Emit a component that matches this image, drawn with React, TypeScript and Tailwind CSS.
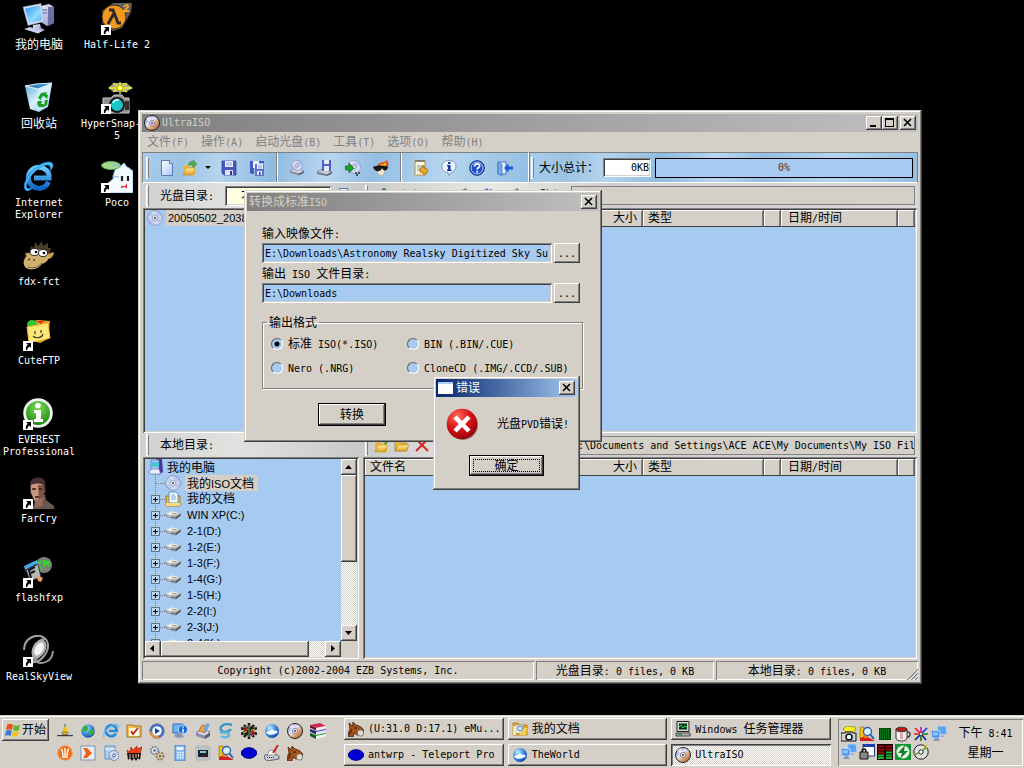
import React from 'react';

const MONO = "font-['DejaVu_Sans_Mono','Noto_Sans_CJK_SC',monospace]";
const CJK = "font-['Noto_Sans_CJK_SC',sans-serif] text-[12px]";
const SMALL_SANS = "font-['Liberation_Sans','Noto_Sans_CJK_SC',sans-serif] text-[11px]";
const RAISED = 'bg-[#d4d0c8] shadow-[inset_-1px_-1px_0_#404040,inset_1px_1px_0_#fff,inset_-2px_-2px_0_#808080]';
const WINDOW = 'bg-[#d4d0c8] shadow-[inset_-1px_-1px_0_#404040,inset_1px_1px_0_#d4d0c8,inset_-2px_-2px_0_#808080,inset_2px_2px_0_#fff]';
const SUNKEN = 'shadow-[inset_1px_1px_0_#808080,inset_-1px_-1px_0_#fff,inset_2px_2px_0_#404040,inset_-2px_-2px_0_#d4d0c8]';
const THIN = 'shadow-[inset_1px_1px_0_#808080,inset_-1px_-1px_0_#fff]';
const DITHER = 'bg-[repeating-conic-gradient(#fff_0_25%,#d4d0c8_0_50%)] bg-[length:2px_2px]';
const BRUSHED = 'bg-[linear-gradient(100deg,#d0d0d0,#e2e2e0_12%,#c9c9c9_28%,#e8e8e6_45%,#cfcfcf_60%,#d8d8d6)]';

/* Chinese runs are set at 12px, Latin runs in a half-width face. */
function T({ children, sans = false }: { children: string; sans?: boolean }) {
  const parts = children.split(/([\u3000-\u9fff\uff00-\uffef]+)/).filter(Boolean);
  return (
    <span className={`whitespace-pre ${sans ? SMALL_SANS : `${MONO} text-[10px]`}`}>
      {parts.map((p, i) =>
        /[\u3000-\u9fff\uff00-\uffef]/.test(p) ? <span key={i} className={CJK}>{p}</span> : p
      )}
    </span>
  );
}

type IconProps = { children: React.ReactNode; size?: 16 | 32 };
function Ic({ children, size = 16 }: IconProps) {
  return (
    <svg viewBox={size === 16 ? '0 0 16 16' : '0 0 32 32'} className={size === 16 ? 'h-4 w-4 shrink-0' : 'h-8 w-8 shrink-0'} aria-hidden="true">
      {children}
    </svg>
  );
}

function Defs() {
  return (
    <svg width="0" height="0" className="absolute" aria-hidden="true">
      <defs>
        <linearGradient id="screen" x1="0" y1="0" x2="1" y2="1"><stop offset="0" stopColor="#2b8ff0" /><stop offset=".6" stopColor="#8fdcff" /><stop offset="1" stopColor="#4aa8f8" /></linearGradient>
        <linearGradient id="metal" x1="0" y1="0" x2="1" y2="1"><stop offset="0" stopColor="#f4f5ff" /><stop offset="1" stopColor="#8088c0" /></linearGradient>
        <linearGradient id="bin" x1="0" y1="0" x2="1" y2="1"><stop offset="0" stopColor="#5aa6d8" /><stop offset=".5" stopColor="#d8f1fb" /><stop offset="1" stopColor="#6cb2dc" /></linearGradient>
        <linearGradient id="ie" x1="0" y1="0" x2="0" y2="1"><stop offset="0" stopColor="#6fd0ff" /><stop offset="1" stopColor="#0b62c4" /></linearGradient>
        <radialGradient id="green" cx=".5" cy=".3" r=".7"><stop offset="0" stopColor="#7ee05a" /><stop offset="1" stopColor="#1d8a10" /></radialGradient>
        <radialGradient id="red" cx=".35" cy=".25" r=".85"><stop offset="0" stopColor="#ff6a5a" /><stop offset=".5" stopColor="#d41418" /><stop offset="1" stopColor="#8c0008" /></radialGradient>
        <linearGradient id="disc" x1="0" y1="0" x2="1" y2="1"><stop offset="0" stopColor="#6a78d8" /><stop offset=".4" stopColor="#dfe6ff" /><stop offset=".65" stopColor="#e0a070" /><stop offset="1" stopColor="#8a4a28" /></linearGradient>
        <linearGradient id="pale" x1="0" y1="0" x2="1" y2="1"><stop offset="0" stopColor="#fff" /><stop offset=".5" stopColor="#b8c0f0" /><stop offset="1" stopColor="#f4f8ff" /></linearGradient>
        <linearGradient id="folder" x1="0" y1="0" x2="0" y2="1"><stop offset="0" stopColor="#ffee9a" /><stop offset="1" stopColor="#e0a020" /></linearGradient>
        <radialGradient id="ball" cx=".35" cy=".3" r=".8"><stop offset="0" stopColor="#c8ecff" /><stop offset=".5" stopColor="#3f8ee8" /><stop offset="1" stopColor="#0a3a9a" /></radialGradient>
        <linearGradient id="page" x1="0" y1="0" x2="1" y2="1"><stop offset="0" stopColor="#fff" /><stop offset="1" stopColor="#a8c8f8" /></linearGradient>
        <linearGradient id="steel" x1="0" y1="0" x2="1" y2="1"><stop offset="0" stopColor="#a8a8a8" /><stop offset=".4" stopColor="#f4f4f4" /><stop offset="1" stopColor="#8c8c90" /></linearGradient>
      </defs>
    </svg>
  );
}

/* ---------- small icons ---------- */
const Disc = () => <Ic><circle cx="8" cy="8" r="7.500" fill="url(#disc)" stroke="#222" /><path d="M8 8 2 4a7 7 0 0 1 4-3z" fill="#fff" opacity=".6" /><circle cx="8" cy="8" r="2.600" fill="#e8e8f8" stroke="#667" strokeWidth=".7" /><circle cx="8" cy="8" r="1" fill="#445" /></Ic>;
const PaleDisc = () => <Ic><circle cx="8" cy="8" r="7.300" fill="url(#pale)" stroke="#8088b8" strokeWidth=".8" /><path d="M8 8 1.500 6 4 2z" fill="#7cc" opacity=".5" /><path d="m8 8 6 2-2 3z" fill="#b8a" opacity=".4" /><circle cx="8" cy="8" r="2.400" fill="#fff" stroke="#8890b0" strokeWidth=".7" /><circle cx="8" cy="8" r="1" fill="#334" /></Ic>;
const Page = () => <Ic><path d="M2.500.5h8l3 3v12h-11z" fill="url(#page)" stroke="#5878b8" /><path d="M10.500.5v3h3" fill="#dce8ff" stroke="#5878b8" /></Ic>;
const Folder = () => <Ic><path d="M1 4h5l1 2h6v8H1z" fill="#e8b838" stroke="#a07818" strokeWidth=".6" /><path d="m1 14 3-6h11l-3 6z" fill="url(#folder)" stroke="#b08820" strokeWidth=".6" /></Ic>;
const OpenFolder = () => <Ic><path d="M1 5h5l1 2h6v8H1z" fill="#e8b838" /><path d="m1 15 3-7h9l-2 7z" fill="url(#folder)" stroke="#b89028" strokeWidth=".6" /><path d="M6 5c1-3 3-4 5-3.500V0l4 4-4 4V5.500c-2-1-3-.5-5-.5z" fill="#4cb040" stroke="#2a7a20" strokeWidth=".4" /></Ic>;
const Floppy = () => <Ic><path d="M1 1h14v14H3l-2-2z" fill="#4858c0" stroke="#2c3890" strokeWidth=".7" /><path d="M4 1h8v6H4z" fill="#e8f0ff" /><path d="M4 10h8v5H4z" fill="#dfe4f8" /><path d="M9 11h2v4H9z" fill="#303c90" /><path d="M5 3h6M5 5h6" stroke="#98a8e0" /></Ic>;
const FloppyAs = () => <Ic><path d="M1 1h14v2H5v11H3l-2-1z" fill="#4858c0" /><path d="M4 1h6v7H4z" fill="#e8f0ff" /><path d="M6 4h9v12H6z" fill="#6070d0" /><path d="M8 4h6v5H8z" fill="#f0f4ff" /><path d="M9 6h4M9 8h4" stroke="#8090d8" /><path d="M8 11h5v4H8z" fill="#e4e8ff" /><path d="M10 12h1.500v3H10z" fill="#3040a0" /></Ic>;
const Burner = () => <Ic><path d="m1 11 5-3 9 3-5 4z" fill="#d8dce4" stroke="#707888" strokeWidth=".6" /><path d="m1 11 9 2v2.500L1 13z" fill="#888ea0" /><path d="m10 13 5-2v2l-5 2.500z" fill="#60667a" /><circle cx="8" cy="5.500" r="5.200" fill="url(#pale)" stroke="#8088b8" strokeWidth=".7" /><circle cx="8" cy="5.500" r="1.400" fill="#fff" stroke="#667" strokeWidth=".6" /></Ic>;
const Drive2 = () => <Ic><path d="m0 12 5-3 10 3-5 3z" fill="#c8ccd4" stroke="#606878" strokeWidth=".6" /><path d="m0 12 10 2.500v1.500L0 14z" fill="#777d90" /><path d="m10 14.500 5-2.500v1.500L10 16z" fill="#505668" /><path d="M5 0h9v11H5z" fill="#5060c0" /><path d="M7 0h5v4H7zM7 6h5v5H7z" fill="#e4e8ff" /></Ic>;
const DiscArrow = () => <Ic><circle cx="9" cy="7" r="6.500" fill="url(#pale)" stroke="#8898b0" strokeWidth=".7" /><circle cx="9" cy="7" r="1.800" fill="#fff" stroke="#667" strokeWidth=".6" /><path d="M0 6h4V3l5 5-5 5v-3H0z" fill="#20a028" stroke="#0a6010" strokeWidth=".6" /><path d="M10 13h2m1 0h2m-4 2h2" stroke="#234" strokeWidth="1.500" /></Ic>;
const Flame = () => <Ic><path d="M4 6c2-5 6-2 10-6 3 5 1 9-4 9z" fill="#e05010" /><path d="M7 5c3-2 4 0 6-3 1 3-1 5-4 6z" fill="#ffc830" /><path d="M4 8h8l-1 6-3 2-3-2z" fill="#f4e8c8" stroke="#a09070" strokeWidth=".5" /><path d="M0 7c4-2 12-2 15 0-1 5-5 4-6 1C8 12 2 13 0 7z" fill="#181818" /></Ic>;
const Options = () => <Ic><path d="M2 1h10v14H2z" fill="#fff8d8" stroke="#c09038" /><path d="M3 0v2m2-2v2m2-2v2m2-2v2m2-2v2" stroke="#445" /><path d="M4 6h6M4 8h4M4 10h3" stroke="#89a" /><path d="M7 9 11 5v3h2l2 3-2 3h-3l-1-2H7z" fill="#e8a828" stroke="#8a5808" strokeWidth=".7" /></Ic>;
const Info = () => <Ic><path d="M8 .5c5 0 7 3 7 6s-2 5-5 6l-2 3-1-3c-4 0-6-3-6-6s2-6 7-6z" fill="#eef4ff" stroke="#7898c8" /><path d="M7 2h2.500v2H7zM6 5h3.500v4.500h1V11H6V9.500h1v-3H6z" fill="#1838a0" /></Ic>;
const Help = () => <Ic><circle cx="8" cy="8" r="7.300" fill="#2050c8" stroke="#102878" /><circle cx="8" cy="8" r="6" fill="none" stroke="#b8d0ff" /><path d="M5.500 6.500C5.500 3 11 3 10.700 6c-.2 1.500-2.500 1.700-2.500 3.500" fill="none" stroke="#fff" strokeWidth="1.700" /><circle cx="8.200" cy="11.800" r="1" fill="#fff" /></Ic>;
const Exit = () => <Ic><path d="M1 2h8v12H1z" fill="#e4f0ff" stroke="#4070c0" /><path d="m1 2 4 2v12l-4-2z" fill="#78a8e8" stroke="#4070c0" strokeWidth=".7" /><path d="M16 6.500h-4.500V3.500L7 8l4.500 4.500v-3H16z" fill="#1858d8" /></Ic>;
const RedX = () => <Ic><path d="m2 2 12 12M14 2 2 14" stroke="#d82020" strokeWidth="1.800" /></Ic>;
const GreenUp = () => <Ic><path d="m8 0 7 6h-4v8H5V6H1z" fill="#28a030" stroke="#0a6010" strokeWidth=".6" /></Ic>;
const Gear = () => <Ic><circle cx="8" cy="8" r="5.500" fill="none" stroke="#3868c0" strokeWidth="4" strokeDasharray="3 1.500" /><circle cx="8" cy="8" r="4" fill="#90b8f0" stroke="#3868c0" /></Ic>;
const Hdd = () => <Ic><path d="m0 7 6-3 10 2.500-5.500 3.500z" fill="url(#steel)" /><path d="m0 7 10.500 3v2.500L1 9.500z" fill="#808084" /><path d="M10.500 10 16 6.500v2l-5.500 4z" fill="#58585c" /><path d="m2 8.500 4 1.200" stroke="#d8d8d8" /><path d="m7 6 4 .8" stroke="#8a8a8a" strokeWidth=".8" /></Ic>;
const Pc = () => <Ic><path d="M9 0h6l1 13-4 3V2z" fill="#483898" /><path d="M4 1h8v11H4z" fill="#b0c8f0" stroke="#5860b0" strokeWidth=".6" /><path d="M4 3h8v5H4z" fill="#48c8d8" /><path d="m1 13 4-3h7l2 5H4z" fill="#e8ecff" stroke="#5860a8" strokeWidth=".6" /></Ic>;
const Docs = () => <Ic><path d="M1 5h14v10H1z" fill="#f0b838" stroke="#b07810" /><path d="M4 1h7l2 2v9H4z" fill="#f4faff" stroke="#5898d0" /><path d="M6 4h4M6 6h5M6 8h5" stroke="#6ab0e8" /><path d="M1 12h14v3H1z" fill="#f8d878" /></Ic>;
const DocsTask = () => <Ic><path d="M1 2h5l1.500 2H15v10H1z" fill="#e8a828" stroke="#a06c08" strokeWidth=".7" /><path d="M4 4h7v8H4z" fill="#f8fcff" stroke="#8898b0" strokeWidth=".6" /><path d="m12 7 3 0-1 7H7z" fill="#f8d050" /><path d="M1 5h3v9H1z" fill="#ffe890" /><circle cx="8" cy="7.500" r="2.500" fill="#d8f0ff" stroke="#4878b8" /></Ic>;
const Ball = () => <Ic><circle cx="8" cy="8" r="7" fill="url(#ball)" /><path d="M2 10c2-3 4-1 6-4 1 3 3 0 6 3-3 3-9 4-12 1z" fill="#f4fcff" /></Ic>;
const Globe = () => <Ic><circle cx="8" cy="8" r="6.800" fill="url(#ball)" /><path d="M3 4c3-3 6-1 5 2S3 10 2 8zm7 3c3-2 4.500 0 4 2s-4 5-5 3 0-3 1-5z" fill="#38b038" /></Ic>;
const IeS = () => <Ic><path d="M13 10.500a5.500 5.500 0 1 1 .7-3.500v1H6" fill="none" stroke="#2488e0" strokeWidth="2.700" /><path d="M1 14C-1 9 10-1 15 2c1 1 0 3-1 4" fill="none" stroke="#68b8f0" strokeWidth="1.300" /></Ic>;
const Oval = () => <Ic><ellipse cx="8" cy="8" rx="7.700" ry="5.300" fill="#0000d8" stroke="#000080" /><path d="M4 7h3m2 2h3M5 10h2" stroke="#0000a0" /></Ic>;
const Donkey = () => <Ic><path d="M1 2 4.500 5 5 1l3 3c4 1 7 3 8 6l-3 3-4 1-3-2-1 4H0c1-3 0-5 2-8z" fill="#a4531c" stroke="#401804" strokeWidth=".8" /><circle cx="12.500" cy="12" r="3.200" fill="#e0dcd4" stroke="#554" strokeWidth=".7" /><path d="M6 7h3M1 14c2-2 2-4 3-6" stroke="#381400" strokeWidth="1" fill="none" /></Ic>;
const Net = () => <Ic><path d="M6 0h9l1 8-8 1z" fill="#58a4f8" stroke="#c0d0e8" /><path d="m11 9 3 2h-6z" fill="#98a8c0" /><path d="m0 4 9 1v7l-8 0z" fill="#4890f0" stroke="#c8d8f0" /><path d="m2 6 5 .5v3l-5 0z" fill="#88c8ff" /><path d="M4 12h3l2 3H2z" fill="#8898b8" /></Ic>;
const Plug = () => <Ic><path d="M8 1v8" stroke="#789" strokeWidth="1.500" /><path d="M6 4h4v5H6z" fill="#f0c020" /><path d="M5 9h6v3H5z" fill="#d8b020" stroke="#554" strokeWidth=".5" /><path d="M0 12.500h16" stroke="#384048" strokeWidth="1.500" /><path d="M0 11h5m6 0h5" stroke="#c8ccd0" strokeWidth="2" /></Ic>;
const Check = () => <Ic><path d="M1 2h6l1 1h7v11H1z" fill="#f4c050" stroke="#a07020" /><path d="M3 5h10v8H3z" fill="#fffbe8" /><path d="m5 8 2 3 5-6" fill="none" stroke="#c02010" strokeWidth="1.800" /></Ic>;
const Player = () => <Ic><circle cx="8" cy="8" r="7.300" fill="#3868c8" stroke="#889" /><path d="M1 8a7 7 0 0 0 10 6.500z" fill="#e89030" /><circle cx="8" cy="8" r="4.800" fill="#f4faff" /><path d="m6 5 5 3-5 3z" fill="#1840a0" /></Ic>;
const PcInfo = () => <Ic><path d="M1 1h10l1 9H1z" fill="#68b8f8" stroke="#3868b0" /><path d="m4 11 6 0 2 3-7 1-3-2z" fill="#8898b0" /><circle cx="11" cy="6.500" r="4.500" fill="#1068e0" stroke="#cde" /><path d="M11 3.500v1.200m0 1v4" stroke="#fff" strokeWidth="1.500" /></Ic>;
const Printer = () => <Ic><path d="m1 10 6-4 8 3-5 5z" fill="#d8dce8" stroke="#556" strokeWidth=".7" /><path d="m1 10 9 2.500v3.500l-9-3z" fill="#8890a8" /><path d="m10 12.500 5-3v3.500l-5 3z" fill="#586078" /><path d="M4 8 7 2l5 1-2 7z" fill="#f0a030" stroke="#845" strokeWidth=".6" /><path d="m8 7 4-7 3 1-3 7z" fill="#68a8e8" /></Ic>;
const Swirl = () => <Ic><path d="M14 2C5-1 0 5 4 8c3 2 8 0 9-2" fill="none" stroke="#3898c8" strokeWidth="2.400" /><path d="M2 9c2 2 10-1 9 3-1 3-6 3-8 1" fill="none" stroke="#60b8d8" strokeWidth="2.400" /></Ic>;
const Burst = () => <Ic><path d="M8 0v16M0 5l16 6M0 11l16-6M3 2l10 12M13 2 3 14" stroke="#181818" strokeWidth="2.600" /><path d="M8 2v12" stroke="#30b030" strokeWidth="1.300" /><path d="m2 6 4 1.500m4 1 4 1.500" stroke="#e02020" strokeWidth="1.500" /><path d="m2 10 4-1.500m4-1L14 6" stroke="#c8c830" strokeWidth="1.300" /><path d="m4 3 3 4m2 2 3 4" stroke="#e84090" strokeWidth="1.200" /></Ic>;
const Books = () => <Ic><path d="m0 2 10-2 6 3-10 2z" fill="#d02858" /><path d="m0 2 6 3v2.500L0 4.500z" fill="#701030" /><path d="m6 5 10-2v2.500L6 7.500z" fill="#f4ecec" /><path d="m0 6 6 2 10-2v1L6 9.500z" fill="#3040c8" /><path d="m0 6 6 3v2.500L0 8.500z" fill="#182070" /><path d="m6 9 10-2v2.500L6 11.500z" fill="#e8e8f4" /><path d="m0 10 6 2 10-2v1L6 13.500z" fill="#28a040" /><path d="m0 10 6 3v3l-6-3z" fill="#105820" /><path d="m6 13 10-2v2.500L6 16z" fill="#e8f4e8" /></Ic>;
const Orange = () => <Ic><circle cx="8" cy="8" r="7.300" fill="#f07018" stroke="#e8a070" /><path d="M4 4c2 1 2 5 2 9M8 3v10m4-9c-2 1-2 5-2 9" stroke="#fff" strokeWidth="1.400" fill="none" /></Ic>;
const Play = () => <Ic><path d="M1 1h14v14H1z" fill="#e8ecf4" stroke="#8090a8" /><path d="M3 3h4l5 5-5 5H3l3-5z" fill="#f06010" /></Ic>;
const DiscBox = () => <Ic><path d="M2 1h10v13H2z" fill="#a8d0f0" stroke="#5890c0" /><path d="M2 4h10" stroke="#fff" /><circle cx="11" cy="10.500" r="5" fill="url(#pale)" stroke="#8088a8" /><circle cx="11" cy="10.500" r="1.300" fill="#fff" stroke="#568" /></Ic>;
const Nero = () => <Ic><path d="M2 9 1 5l3 2 1-5 2 3 4-4v3l5-2-2 7z" fill="#f04010" stroke="#901000" strokeWidth=".6" /><path d="M1 8h14l-1 7-2-2-2 3-2-3-2 3-2-3-2 2z" fill="#181010" /><path d="M4 9v4m3-4v4m3-4v4m2.500-4v3" stroke="#f0c8a0" /></Ic>;
const Gears = () => <Ic><circle cx="5.500" cy="5.500" r="3.600" fill="#e8ecf8" stroke="#8890a8" strokeWidth="2.400" strokeDasharray="2 .8" /><circle cx="5.500" cy="5.500" r="1.300" fill="#606880" /><circle cx="11" cy="11" r="3.400" fill="#f0e0b0" stroke="#908070" strokeWidth="2.400" strokeDasharray="2 .8" /><circle cx="11" cy="11" r="1.200" fill="#605848" /></Ic>;
const Calc = () => <Ic><path d="M3 0h10v16H3z" fill="#88b8f0" stroke="#4880c8" /><path d="M4.500 2h7v3h-7z" fill="#e8f8ff" /><path d="M5 7.500h7M5 10h7M5 12.500h7" stroke="#fff" strokeWidth="1.600" strokeDasharray="1.600 1" /></Ic>;
const Cam = () => <Ic><rect width="16" height="16" rx="4" fill="#a8b8c0" opacity=".6" /><path d="M3 5h10v7H3z" fill="#202428" /><path d="M5 6h6v2H5z" fill="#78c8e8" /></Ic>;
const Search = () => <Ic><path d="M1 1h4v12H1z" fill="#f0c020" stroke="#906000" strokeWidth=".6" /><path d="m1 12 6-2 9 5H1z" fill="#d02020" /><path d="M5 2h4v10H5z" fill="#e88020" /><circle cx="8.500" cy="5.500" r="4" fill="#d8f4ff" stroke="#2860b0" strokeWidth="1.300" /><path d="m11 8 4 5" stroke="#2860b0" strokeWidth="2" /></Ic>;
const Scanner = () => <Ic><path d="m1 10 10-1 4 2v3l-12 2-3-3z" fill="#c8ccd0" stroke="#445" strokeWidth=".8" /><path d="m3 10 3-5 6 1-1 4z" fill="#fff" stroke="#566" strokeWidth=".6" /><path d="m9 8 5-8" stroke="#d02020" strokeWidth="2" /><path d="M3 12.500h8" stroke="#333" strokeDasharray="1 1" /></Ic>;
const Monitor = () => <Ic><path d="M2 .5h12v10H2z" fill="#d8d8d8" stroke="#222" /><path d="M4 2.500h8v6H4z" fill="#003018" /><path d="m4 6 2-2 2 3 2-2 2 1" stroke="#30f060" fill="none" /><path d="M1 12h14v3H1z" fill="#b8b8b8" stroke="#222" strokeWidth=".8" /><path d="M3 13.500h4" stroke="#20a040" /></Ic>;
const Camera = () => <Ic><path d="m2 3 4-3 8 1 1 3-4 2H5z" fill="#f8f020" stroke="#666600" strokeWidth=".6" /><path d="M0 7h4l1-1h6l1 1h3v8H0z" fill="#d0d0d0" stroke="#111" /><circle cx="8" cy="11" r="3" fill="#e8ffff" stroke="#111" strokeWidth="1.500" /></Ic>;
const GridG = () => <Ic><path d="M2 2h12v12H2z" fill="#004808" /><path d="M3 4h10M3 6h10M3 8h10M3 10h10M3 12h10" stroke="#18a030" strokeDasharray="1 1" /></Ic>;
const Mug = () => <Ic><path d="M1 3h11v9c0 4-11 4-11 0z" fill="#f4f0f0" stroke="#333" /><ellipse cx="6.500" cy="3.500" rx="5.500" ry="2.300" fill="#c01818" stroke="#333" /><path d="M5 7h3v6H5z" fill="#e8a8a8" /><path d="M12 6c4-1 4 5 0 5" fill="none" stroke="#444" strokeWidth="1.500" /></Ic>;
const Star = () => <Ic><path d="M8 7V1" stroke="#d020c0" strokeWidth="1.700" /><path d="m9 7 5-5" stroke="#2038e0" strokeWidth="1.700" /><path d="M7 7 2 2M7 8H1" stroke="#e02020" strokeWidth="1.700" /><path d="M9 8h6M8 9v6" stroke="#188020" strokeWidth="1.700" /><path d="m9 9 4 5M7 9l-5 5" stroke="#1020a0" strokeWidth="1.700" /></Ic>;
const Lock = () => <Ic><path d="M4 0h11.500v12H4z" fill="#fff" stroke="#223888" /><path d="M4 0h11.500v3H4z" fill="#2040b0" /><path d="M1 8h8v7H1z" fill="#888" stroke="#111" /><path d="M3 8c0-4 4-4 4 0" fill="none" stroke="#111" strokeWidth="1.400" /></Ic>;
const Meter = () => <Ic><path d="M0 0h16v16H0z" fill="#180000" /><path d="M1 2.500h6M1 5.500h6M1 8.500h6M9 2.500h6M9 5.500h6" stroke="#980808" strokeWidth="2" /><path d="M1 11.500h6M1 14h6M9 8.500h6M9 11.500h6M9 14h6" stroke="#18b030" strokeWidth="2" /></Ic>;
const Bolt = () => <Ic><path d="M0 0h16v16H0z" fill="#189038" /><circle cx="8" cy="8" r="6.500" fill="#e8f4e8" /><path d="M10 1 3 9h4l-2 6 8-8H9z" fill="#108028" /></Ic>;
const CdTray = () => <Ic><circle cx="8" cy="8" r="7.200" fill="#e0e4e0" stroke="#222" /><path d="M8 8 12 2l2 3zM8 8l-6 4-1-3z" fill="#80a858" /><circle cx="8" cy="8" r="2.200" fill="#fff" stroke="#222" /><path d="m11 1 4 0-1 3z" fill="#e8d020" /></Ic>;
const Flag = () => <Ic><path d="M2 3c2-1.500 4-1.500 6-.3L7 8C5 7 3.500 7 1 8z" fill="#e85020" /><path d="M9 3c2 1 4 1 6-.5L14 8c-2 1.200-4 1.200-6 0z" fill="#60b830" /><path d="M1 9c2-1.200 4-1.200 5.800-.2L5.500 14C4 13 2 13 0 14z" fill="#3878e0" /><path d="M7.800 9c2 1.200 4 1 6 0l-1.300 5c-2 1.300-4 1-6 0z" fill="#f8c020" /></Ic>;

/* ---------- desktop icons ---------- */
function Shortcut() {
  return <g><path d="M0 22h10v10H0z" fill="#fff" /><path d="M3 24h5v5L6.500 27.500C5 28.500 4.500 29.500 4.300 31L3 31c-.6-2 .4-4 1.800-5.200z" fill="#000" /></g>;
}
const MyComputer = () => <Ic size={32}><path d="m18 3 8-2 5 3v16l-7 3-6-4z" fill="url(#metal)" /><path d="m25 4 6 0v16l-6 3z" fill="#6870a8" /><path d="M19 7h5M19 10h5" stroke="#5058a0" /><path d="m0 4 18-3.500 3 18-16 4z" fill="#dde2f8" stroke="#8890c0" strokeWidth=".6" /><path d="m2 5.500 15-3 2 14.500L6 20.500z" fill="url(#screen)" /><path d="m10 22 7-1 1 4 4 2-7 3-10-3 5-2z" fill="url(#metal)" /><path d="m1 26 6-2 13 3.500-5 3z" fill="#c8d0f0" /></Ic>;
const Recycle = () => <Ic size={32}><path d="m2 4 13 2L29 1l-4 24-9 5-9-3z" fill="url(#bin)" /><path d="m2 4 11-2 16-1-14 6z" fill="#3888c0" stroke="#e4f8ff" /><path d="m15 7-1 22 11-5L29 2z" fill="#d8f2ff" opacity=".55" /><path d="m15 16 3-5 6-1-1 2 2 1-1 4-3-3-2 1-1 3zM15 19l4 0-1 3h3v3h-5l-2-3zM22 18l3 0-1 5-3 2z" fill="#18a020" /></Ic>;
const IeBig = () => <Ic size={32}><path d="M25.500 21A10.500 10.500 0 1 1 26 14v3H11" fill="none" stroke="url(#ie)" strokeWidth="5" /><path d="M4 30C-6 26 13-1 27 1c5 1 3 6 0 9 1-4 0-6-3-6C12 6 1 23 4 27c2 1 5 0 7-2-2 3-5 5-7 5z" fill="#48b8f8" stroke="#1878d0" strokeWidth=".5" /></Ic>;
const Fdx = () => <Ic size={32}><path d="m7 13 1-7 3 2 1-6 3 4 4-5 1 5 5-3 0 5 3 0-2 7z" fill="#4a3c28" /><path d="M25 14c2 0 5-3 6-1-1 4-3 6-7 6zM8 14c-3-2-5-1-6 0l3 4z" fill="#c89c58" /><path d="M9 12c5-4 12-3 16 1 2 6-1 9-6 11-4 6-13 7-17 3-4-6 1-12 7-15z" fill="#d0b070" /><ellipse cx="11.500" cy="12" rx="4.500" ry="3.500" fill="#fff" stroke="#222" /><ellipse cx="20" cy="13" rx="4.500" ry="3.500" fill="#fff" stroke="#222" /><circle cx="13" cy="12" r="1.300" fill="#000" /><circle cx="21" cy="13" r="1.300" fill="#000" /><path d="M5 27c6 2 10 0 14-4" fill="none" stroke="#786030" /><path d="m5 20 2-1m3 1 2 0" stroke="#584020" strokeWidth="1.500" /></Ic>;
const Cute = () => <Ic size={32}><path d="M5 3 15 1l12 1-2 18-8 4L5 20z" fill="#e8a020" /><circle cx="9" cy="6" r="5" fill="#28c838" /><path d="M13 2h8l-3 3z" fill="#e03030" /><path d="m4 8 21-4 2 15-11 3-10 1z" fill="#ffe878" stroke="#f0b838" /><path d="M12 12v3m6-4v3m-8 3c3 3 9 2 10-2" stroke="#333" fill="none" strokeWidth="1.200" /><Shortcut /></Ic>;
const Everest = () => <Ic size={32}><circle cx="15" cy="15" r="14.800" fill="#f0f4f0" /><circle cx="15" cy="15" r="12" fill="url(#green)" /><circle cx="15" cy="7.500" r="2.800" fill="#fff" /><path d="M11 12h7v9h2v3h-9v-3h2v-6h-2z" fill="#fff" /><Shortcut /></Ic>;
const Far = () => <Ic size={32}><path d="M7 6c2-7 14-7 15-1l1 11H7z" fill="#4a3030" /><path d="M8 8c4-2 10-2 12 0l0 10-4 7h-4l-4-9z" fill="#c89880" /><path d="M15 8h6v11l-5 6z" fill="#805040" /><path d="M9 12h4m3 0h3M12 20h4" stroke="#301814" strokeWidth="1.400" /><path d="m12 25 4 0 6-8 1 6 8 6v3H9z" fill="#685850" /><path d="m12 23 9-3-2 9-7 2z" fill="#9a6858" /><Shortcut /></Ic>;
const Flash = () => <Ic size={32}><circle cx="21" cy="9" r="8" fill="#788078" /><path d="m14 6 4 7m0-8-5 7m7-8 2 7m-2-4h4m-2-3 4 6m1-4-6 1" stroke="#28e028" strokeWidth="1.800" fill="none" /><path d="m1 10 13-6 1 3-13 7z" fill="#48a8e8" /><path d="m3 14 12-6 3 13-11 4z" fill="#b0b8b8" stroke="#334" /><path d="m8 22-2-8 6-3m-4 6 4-2" stroke="#181818" strokeWidth="2" fill="none" /><path d="m13 19 7 3-2 4-3-1z" fill="#f0a060" /><Shortcut /></Ic>;
const Galaxy = () => <Ic size={32}><path d="M1 15C1 2 14-1 20 2c7 4 6 13 1 19-4 5-9 7-13 6 3-1 6-3 8-6" fill="none" stroke="#a0a0a0" strokeWidth="2" /><path d="M30 16c-1 10-8 12-13 12-7-1-9-9-5-16 2-5 6-8 10-8" fill="none" stroke="#989898" strokeWidth="2" /><ellipse cx="16" cy="14" rx="6.500" ry="10" transform="rotate(30 16 14)" fill="#b0b0b0" /><ellipse cx="16" cy="14" rx="4" ry="7" transform="rotate(30 16 14)" fill="#f4f4f4" /><Shortcut /></Ic>;
const HalfLife = () => <Ic size={32}><path d="M12 0h19l-1 9-9 16-9 3L1 20V8z" fill="#606060" /><circle cx="13" cy="14" r="12" fill="#f09820" stroke="#403020" /><path d="M8 7h4l5 13h3M12.500 11 7 21" stroke="#282828" strokeWidth="2.800" fill="none" /><path d="M23 4c1-3 5-2 4 0l-4 4h5" fill="none" stroke="#f8a828" strokeWidth="1.800" /><Shortcut /></Ic>;
const Hyper = () => <Ic size={32}><path d="m7 6 6-5h12l7 5-7 4H13z" fill="#a8a890" /><path d="M8 6h23M19 0v12M12 1l14 9M26 1 12 10" stroke="#f8f010" strokeWidth="1.300" /><circle cx="19" cy="6" r="3" fill="#ffff60" stroke="#888800" strokeWidth=".7" /><path d="M2 16h8l3-3h8l2 3h5v15H2z" fill="#909090" stroke="#ccc" /><circle cx="16" cy="23" r="7" fill="#18c8c8" stroke="#181818" strokeWidth="2" /><path d="M12 21c1-3 4-4 6-3" stroke="#c8ffff" strokeWidth="1.800" fill="none" /><path d="M24 19h4v9h-4z" fill="#303030" /><Shortcut /></Ic>;
const PocoIc = () => <Ic size={32}><path d="M13 12c1-4 4-7 7-7l3-3 3 4c3 1 4 3 6 4v22H10l-4-9 6-5z" fill="#f4fbff" stroke="#88c8f0" /><ellipse cx="10" cy="4.500" rx="9.500" ry="4" fill="#a0d890" stroke="#60a850" /><path d="M20 6c-2-2-6-2-9-2M11 15l7 1" stroke="#88b8e8" fill="none" /><path d="M21 15v5m6-5v5" stroke="#182030" strokeWidth="2.200" /><path d="m20 25 4 0 2-3 0 6-2-2-4 1z" fill="#e03050" /><Shortcut /></Ic>;

type DesktopItem = { icon: () => React.ReactElement; lines: string[] };
const desktopA: DesktopItem[] = [
  { icon: MyComputer, lines: ['我的电脑'] },
  { icon: Recycle, lines: ['回收站'] },
  { icon: IeBig, lines: ['Internet', 'Explorer'] },
  { icon: Fdx, lines: ['fdx-fct'] },
  { icon: Cute, lines: ['CuteFTP'] },
  { icon: Everest, lines: ['EVEREST', 'Professional'] },
  { icon: Far, lines: ['FarCry'] },
  { icon: Flash, lines: ['flashfxp'] },
  { icon: Galaxy, lines: ['RealSkyView'] },
];
const desktopB: DesktopItem[] = [
  { icon: HalfLife, lines: ['Half-Life 2'] },
  { icon: Hyper, lines: ['HyperSnap-DX', '5'] },
  { icon: PocoIc, lines: ['Poco'] },
];

function DesktopColumn({ items }: { items: DesktopItem[] }) {
  return (
    <div className="flex w-[78px] flex-col pt-px">
      {items.map(({ icon: Icon, lines }) => (
        <button key={lines[0]} type="button" className="flex h-[79px] flex-col items-center justify-start gap-1 pt-0.5 text-white">
          <Icon />
          <span className="flex flex-col items-center">
            {lines.map((l) => <span key={l} className="flex h-3 items-center leading-3"><T>{l}</T></span>)}
          </span>
        </button>
      ))}
    </div>
  );
}

function CapButton({ kind, label }: { kind: 'min' | 'max' | 'close'; label: string }) {
  return (
    <button type="button" aria-label={label} className={`flex h-[14px] w-4 items-center justify-center ${RAISED}`}>
      <svg viewBox="0 0 16 14" className="h-[14px] w-4" aria-hidden="true">
        {kind === 'min' && <path d="M4 9h6v2H4z" />}
        {kind === 'max' && <path d="M3 2h9v9H3zM4 4v6h7V4z" fillRule="evenodd" />}
        {kind === 'close' && <path d="m4 3 7 7M11 3l-7 7" stroke="#000" strokeWidth="1.600" />}
      </svg>
    </button>
  );
}

const Grip = () => <span className="h-[22px] w-[3px] shrink-0 border border-white border-r-[#808080] bg-[#e8e8e8]" />;
const Sep = () => <span className="flex h-full w-3 shrink-0 justify-center"><span className="w-0.5 border-l border-r border-l-[#808080] border-r-white" /></span>;

function ToolButton({ label, wide = 'w-7', children }: { label: string; wide?: string; children: React.ReactNode }) {
  return <button type="button" aria-label={label} className={`flex shrink-0 items-center justify-center ${wide}`}>{children}</button>;
}

function FileTable({ label }: { label: string }) {
  const cell = 'h-[15px] border-b border-b-[#404040] border-r border-r-[#606060] bg-[#d4d0c8] shadow-[inset_1px_1px_0_#fff,inset_-1px_0_0_#808080] px-[5px] py-0 font-normal leading-[14px]';
  return (
    <div className={`min-w-0 flex-1 bg-[#a6caf0] p-0.5 ${SUNKEN}`}>
      <table aria-label={label} className="w-full table-fixed border-separate border-spacing-0">
        <colgroup>
          <col /><col className="w-[80px]" /><col className="w-[121px]" /><col className="w-[17px]" /><col className="w-[117px]" /><col className="w-[17px]" />
        </colgroup>
        <thead>
          <tr>
            <th className={`${cell} text-left`}><T>文件名</T></th>
            <th className={`${cell} text-right`}><T>大小</T></th>
            <th className={`${cell} text-left`}><T>类型</T></th>
            <th className={cell} />
            <th className={`${cell} pl-[7px] text-left`}><T>日期/时间</T></th>
            <th className={cell} />
          </tr>
        </thead>
      </table>
    </div>
  );
}

function Arrow({ dir }: { dir: 'up' | 'down' | 'left' | 'right' }) {
  const d = { up: 'M4 10h7L7.500 6z', down: 'M4 6h7L7.500 10z', left: 'M9 4v7L5 7.500z', right: 'M6 4v7l4-3.500z' }[dir];
  return (
    <button type="button" aria-label={dir} className={`h-4 w-4 shrink-0 ${RAISED}`}>
      <svg viewBox="0 0 16 16" className="h-4 w-4" aria-hidden="true"><path d={d} /></svg>
    </button>
  );
}

function Branch({ plus }: { plus: boolean }) {
  return (
    <svg viewBox="0 0 20 16" className="h-4 w-5 shrink-0" aria-hidden="true">
      <path d="M10.500 0v16M11 8.500h9" stroke="#707880" strokeDasharray="1 1" />
      {plus && <><path d="M6.500 4.500h8v8h-8z" fill="#b8d4f0" stroke="#687078" /><path d="M8 8.500h5M10.500 6v5" stroke="#000" /></>}
    </svg>
  );
}

const drives = ['WIN XP(C:)', '2-1(D:)', '1-2(E:)', '1-3(F:)', '1-4(G:)', '1-5(H:)', '2-2(I:)', '2-3(J:)', '2-4(K:)'];

function Tree() {
  return (
    <div className={`flex w-[216px] shrink-0 flex-col bg-[#d4d0c8] p-0.5 ${SUNKEN}`}>
      <div className="flex min-h-0 flex-1">
        <ul className="min-w-0 flex-1 overflow-hidden bg-[#a6caf0]">
          <li className="flex h-4 items-center gap-1 pl-0.5"><Pc /><T>我的电脑</T></li>
          <li className="flex h-4 items-center"><Branch plus={false} /><PaleDisc /><span className="ml-1 flex h-4 items-center bg-[#d4d0c8] pl-0.5 pr-1"><T sans>我的ISO文档</T></span></li>
          <li className="flex h-4 items-center"><Branch plus /><Docs /><span className="ml-1 pl-0.5 leading-4"><T>我的文档</T></span></li>
          {drives.map((d) => (
            <li key={d} className="flex h-4 items-center"><Branch plus /><Hdd /><span className="ml-1 pl-0.5 leading-4"><T sans>{d}</T></span></li>
          ))}
        </ul>
        <div className={`flex w-4 flex-col ${DITHER}`}>
          <Arrow dir="up" />
          <div className={`h-[87px] ${RAISED}`} />
          <div className="flex-1" />
          <Arrow dir="down" />
        </div>
      </div>
      <div className="flex h-4">
        <div className={`flex flex-1 ${DITHER}`}>
          <Arrow dir="left" />
          <div className={`w-[148px] ${RAISED}`} />
          <div className="flex-1" />
          <Arrow dir="right" />
        </div>
        <div className="w-4" />
      </div>
    </div>
  );
}

const TOOLBLUE = 'bg-[linear-gradient(100deg,#a9cdec,#9cc3e2_10%,#b4d4ee_20%,#8fbbe0_34%,#b8d6f0_48%,#94bee2_60%,#b6d5ee_78%,#94bfe2)]';

function MainWindow() {
  return (
    <section aria-label="UltraISO" className={`absolute left-[138px] top-[110px] w-[784px] p-1 ${WINDOW}`}>
      <header className="flex h-[18px] items-center gap-0.5 bg-linear-to-r from-[#808080] to-[#c0c0c0] px-0.5 text-[#d4d0c8]">
        <Disc />
        <h1 className="flex flex-1 leading-4"><T>UltraISO</T></h1>
        <div className="flex"><CapButton kind="min" label="最小化" /><CapButton kind="max" label="最大化" /></div>
        <CapButton kind="close" label="关闭" />
      </header>
      <nav className="flex h-5 items-center gap-3 pl-[5px] text-[#808080]">
        {['文件(F)', '操作(A)', '启动光盘(B)', '工具(T)', '选项(O)', '帮助(H)'].map((m) => <button key={m} type="button" className="leading-4"><T>{m}</T></button>)}
      </nav>
      <div className="flex h-[31px]">
        <div className={`flex w-[387px] items-stretch border border-[#808080] border-r-white border-b-white ${TOOLBLUE}`}>
          <span className="flex w-3 items-center pl-[3px]"><Grip /></span>
          <ToolButton label="新建" wide="w-6"><Page /></ToolButton>
          <ToolButton label="打开" wide="w-[22px]"><OpenFolder /></ToolButton>
          <ToolButton label="最近" wide="w-[14px]"><svg viewBox="0 0 6 4" className="h-1 w-1.5" aria-hidden="true"><path d="M0 0h6L3 3z" /></svg></ToolButton>
          <ToolButton label="保存"><Floppy /></ToolButton>
          <ToolButton label="另存为"><FloppyAs /></ToolButton>
          <Sep />
          <ToolButton label="制作光盘映像"><Burner /></ToolButton>
          <ToolButton label="制作硬盘映像"><Drive2 /></ToolButton>
          <ToolButton label="转换格式"><DiscArrow /></ToolButton>
          <ToolButton label="刻录"><Flame /></ToolButton>
          <Sep />
          <ToolButton label="配置"><Options /></ToolButton>
          <ToolButton label="信息"><Info /></ToolButton>
          <ToolButton label="帮助"><Help /></ToolButton>
          <ToolButton label="退出"><Exit /></ToolButton>
        </div>
        <div className={`flex flex-1 items-center border border-[#808080] border-b-white pl-px pr-1 ${TOOLBLUE}`}>
          <Grip />
          <label htmlFor="total" className="w-[69px] pl-[5px] leading-4"><T>大小总计：</T></label>
          <input id="total" readOnly defaultValue="0KB" className={`h-[19px] w-12 bg-white px-0.5 text-right text-[10px] ${MONO} ${SUNKEN}`} />
          <div role="progressbar" aria-valuenow={0} className="ml-1 flex h-5 flex-1 items-center justify-center border border-black bg-[#a6caf0] text-[#603020]"><T>0%</T></div>
        </div>
      </div>
      <div className={`flex h-[25px] items-center ${BRUSHED}`}>
        <div className="flex w-[221px] items-center pl-1">
          <Grip />
          <label htmlFor="boot" className="w-[76px] pl-[11px] leading-4"><T>光盘目录:</T></label>
          <select id="boot" className={`h-5 w-[106px] appearance-none bg-[#ffffe1] pl-4 leading-4 ${CJK} ${SUNKEN}`}><option>不可引导光盘</option></select>
          <ToolButton label="引导文件"><Page /></ToolButton>
        </div>
        <div className="flex flex-1 items-center pl-0.5 pr-[3px]">
          <Grip />
          <div className="flex w-[168px] pl-[3px]">
            <ToolButton label="上级目录" wide="w-[26px]"><GreenUp /></ToolButton>
            <ToolButton label="删除" wide="w-[26px]"><RedX /></ToolButton>
            <ToolButton label="新建文件夹" wide="w-[26px]"><Folder /></ToolButton>
            <ToolButton label="添加文件" wide="w-[26px]"><OpenFolder /></ToolButton>
            <ToolButton label="属性" wide="w-[26px]"><Gear /></ToolButton>
            <ToolButton label="提取" wide="w-[26px]"><OpenFolder /></ToolButton>
          </div>
          <label htmlFor="isoPath" className="w-[35px] pl-1 leading-4"><T>路径:</T></label>
          <input id="isoPath" readOnly defaultValue="/" className={`h-[19px] min-w-0 flex-1 border border-[#808080] bg-[#d4d0c8] px-1 text-[10px] ${MONO}`} />
        </div>
      </div>
      <div className="flex h-[225px] gap-1 px-px">
        <div className={`w-[216px] bg-[#a6caf0] p-0.5 ${SUNKEN}`}>
          <div className="flex h-4 items-center gap-[3px] pl-0.5"><PaleDisc /><span className="bg-[#d4d0c8] pl-0.5 pr-1 leading-4"><T sans>20050502_203835</T></span></div>
        </div>
        <FileTable label="光盘文件" />
      </div>
      <div className={`flex h-6 items-center ${BRUSHED}`}>
        <div className="flex w-[221px] items-center pl-1">
          <Grip />
          <span className="pl-[11px] leading-4"><T>本地目录:</T></span>
        </div>
        <div className="flex min-w-0 flex-1 items-center pl-0.5 pr-[3px]">
          <Grip />
          <div className="flex w-[168px] pl-1">
            <ToolButton label="上级" wide="w-5"><OpenFolder /></ToolButton>
            <ToolButton label="打开目录" wide="w-5"><Folder /></ToolButton>
            <ToolButton label="删除本地文件" wide="w-5"><RedX /></ToolButton>
          </div>
          <label htmlFor="localPath" className="w-[35px] pl-1 leading-4"><T>路径:</T></label>
          <input id="localPath" readOnly defaultValue="C:\Documents and Settings\ACE ACE\My Documents\My ISO Files" className={`h-[19px] min-w-0 flex-1 border border-[#808080] bg-[#d4d0c8] text-[10px] ${MONO}`} />
        </div>
      </div>
      <div className="flex h-[202px] gap-1 px-px"><Tree /><FileTable label="本地文件" /></div>
      <footer className="mt-0.5 flex h-[19px] gap-0.5 leading-4">
        <div className={`flex w-[392px] items-center justify-center ${THIN}`}><T>Copyright (c)2002-2004 EZB Systems, Inc.</T></div>
        <div className={`flex w-[178px] items-center justify-center ${THIN}`}><T>光盘目录: 0 files, 0 KB</T></div>
        <div className={`relative flex flex-1 items-center justify-center ${THIN}`}>
          <T>本地目录: 0 files, 0 KB</T>
          <svg viewBox="0 0 12 12" className="absolute bottom-0 right-0 h-3 w-3" aria-hidden="true"><path d="M1 12 12 1M5 12l7-7M9 12l3-3" stroke="#808080" strokeWidth="1.500" /><path d="M0 12 12 0M4 12l8-8M8 12l4-4" stroke="#fff" strokeWidth=".7" /></svg>
        </div>
      </footer>
    </section>
  );
}

function Format({ label, on = false }: { label: string; on?: boolean }) {
  return (
    <label className="flex h-6 items-center gap-[5px]">
      <input type="radio" name="format" defaultChecked={on} className="h-3 w-3 shrink-0 appearance-none rounded-full border border-[#606060] border-b-white border-r-white bg-[#a6caf0] checked:bg-[radial-gradient(circle,#000_0_2px,#a6caf0_3px)]" />
      <span className="leading-4"><T>{label}</T></span>
    </label>
  );
}

function ConvertDialog() {
  const field = `h-5 w-[290px] bg-[#a6caf0] px-[3px] text-[10px] ${MONO} ${SUNKEN}`;
  const dots = `h-5 w-[26px] text-[10px] ${MONO} ${RAISED}`;
  return (
    <section role="dialog" aria-label="转换成标准ISO" className={`absolute left-[244px] top-[190px] w-[358px] p-[3px] ${WINDOW}`}>
      <header className="flex h-[18px] items-center bg-linear-to-r from-[#808080] to-[#c0c0c0] px-0.5 text-[#d4d0c8]">
        <h2 className="flex flex-1 leading-4"><T>转换成标准ISO</T></h2>
        <CapButton kind="close" label="关闭" />
      </header>
      <form className="flex flex-col px-[15px] pb-[13px] pt-[14px]" onSubmit={(e) => e.preventDefault()}>
        <label htmlFor="src" className="h-[18px] leading-4"><T>输入映像文件:</T></label>
        <div className="flex gap-0.5"><input id="src" readOnly defaultValue="E:\Downloads\Astronomy Realsky Digitized Sky Survey" className={field} /><button type="button" className={dots}>...</button></div>
        <label htmlFor="dst" className="h-5 pt-0.5 leading-4"><T>输出 ISO 文件目录:</T></label>
        <div className="flex gap-0.5"><input id="dst" readOnly defaultValue="E:\Downloads" className={field} /><button type="button" className={dots}>...</button></div>
        <fieldset className="mt-3 w-[321px] border border-[#808080] px-2 pb-2 pt-[3px] shadow-[1px_1px_0_#fff,inset_1px_1px_0_#fff]">
          <legend className="-ml-1 h-[14px] px-0.5 leading-[14px]"><T>输出格式</T></legend>
          <div className="grid grid-cols-[136px_1fr]">
            <Format label="标准 ISO(*.ISO)" on />
            <Format label="BIN (.BIN/.CUE)" />
            <Format label="Nero (.NRG)" />
            <Format label="CloneCD (.IMG/.CCD/.SUB)" />
          </div>
        </fieldset>
        <button type="submit" className={`ml-14 mt-[14px] h-[23px] w-[68px] border border-black leading-4 ${RAISED}`}><T>转换</T></button>
      </form>
    </section>
  );
}

function ErrorDialog() {
  return (
    <section role="alertdialog" aria-label="错误" className={`absolute left-[433px] top-[376px] w-[147px] p-[3px] ${WINDOW}`}>
      <header className="flex h-[18px] items-center gap-[3px] bg-linear-to-r from-[#0a246a] to-[#a6caf0] px-0.5 text-white">
        <svg viewBox="0 0 15 12" className="h-3 w-[15px]" aria-hidden="true"><path d="M0 0h15v12H0z" fill="#fff" /><path d="M0 0h15v2H0z" fill="#a8d0ff" /></svg>
        <h2 className="flex flex-1 leading-4"><T>错误</T></h2>
        <CapButton kind="close" label="关闭" />
      </header>
      <div className="flex items-center gap-[19px] pl-[10px] pt-[11px]">
        <Ic size={32}><circle cx="17" cy="17" r="15" fill="#585040" opacity=".6" /><circle cx="16" cy="16" r="15.300" fill="url(#red)" /><path d="m9 9 14 14M23 9 9 23" stroke="#fff" strokeWidth="4.500" /></Ic>
        <p className="leading-4"><T>光盘PVD错误!</T></p>
      </div>
      <div className="flex pb-[11px] pl-[33px] pt-[15px]">
        <button type="button" className={`flex h-[21px] w-[75px] border border-black p-[3px] ${RAISED}`}><span className="flex h-full w-full items-center justify-center border border-dotted border-black leading-3"><T>确定</T></span></button>
      </div>
    </section>
  );
}

const quick = [
  [Plug, '显示桌面'], [Globe, '地球'], [IeS, 'Internet Explorer'], [Check, '任务'], [Player, '播放器'], [PcInfo, '系统信息'], [Printer, '打印'], [Swirl, '下载'], [Burst, '工具'], [Ball, 'TheWorld'], [Disc, 'UltraISO'], [Books, 'WinRAR'],
  [Orange, '橙'], [Play, '播放'], [DiscBox, '光盘'], [Nero, 'Nero'], [Gears, '设置'], [Calc, '计算器'], [Cam, '相机'], [Search, '搜索'], [Oval, 'Teleport'], [Scanner, '扫描'], [Donkey, 'eMule'],
] as const;

const tasks = [
  [Donkey, '(U:31.0 D:17.1) eMu...'], [DocsTask, '我的文档'], [Monitor, 'Windows 任务管理器'],
  [Oval, 'antwrp - Teleport Pro'], [Ball, 'TheWorld'], [Disc, 'UltraISO'],
] as const;

const tray = [Camera, Search, GridG, Mug, Star, Net, Net, Lock, Meter, Bolt, CdTray];

function Taskbar() {
  return (
    <footer className="flex h-[53px] shrink-0 items-start bg-[#d4d0c8] pl-0.5 pr-px pt-[3px] shadow-[inset_0_1px_0_#d4d0c8,inset_0_2px_0_#fff]">
      <button type="button" className={`mt-px flex h-[22px] w-[47px] items-center gap-px pl-[3px] leading-4 ${RAISED}`}><Flag /><T>开始</T></button>
      <div className="ml-1 mr-[15px] mt-0.5 grid shrink-0 auto-rows-[22px] grid-cols-[repeat(12,23px)]">
        {quick.map(([I, label]) => <button key={label} type="button" aria-label={label} className="flex items-center justify-center"><I /></button>)}
      </div>
      <div className="grid min-w-0 flex-1 auto-rows-[22px] grid-cols-3 gap-1">
        {tasks.map(([I, label]) => (
          <button key={label} type="button" className={`flex min-w-0 items-center gap-1 overflow-hidden pl-1 leading-4 ${label === 'UltraISO' ? `${DITHER} shadow-[inset_1px_1px_0_#404040,inset_-1px_-1px_0_#fff,inset_2px_2px_0_#808080]` : RAISED}`}><I /><T>{label}</T></button>
        ))}
      </div>
      <div className={`ml-[7px] mt-px flex h-[47px] w-[185px] shrink-0 items-center pl-0.5 ${THIN}`}>
        <div className="grid auto-rows-[18px] grid-cols-[repeat(6,18px)]">
          {tray.map((I, i) => <span key={i} className="flex items-center justify-center"><I /></span>)}
        </div>
        <div className="flex flex-1 flex-col items-center leading-[18px]"><T>下午 8:41</T><T>星期一</T></div>
      </div>
    </footer>
  );
}

export default function App() {
  return (
    <main className="flex h-screen flex-col overflow-hidden bg-black text-[12px] text-black">
      <Defs />
      <div className="relative flex min-h-0 flex-1">
        <DesktopColumn items={desktopA} />
        <DesktopColumn items={desktopB} />
        <MainWindow />
        <ConvertDialog />
        <ErrorDialog />
      </div>
      <Taskbar />
    </main>
  );
}
